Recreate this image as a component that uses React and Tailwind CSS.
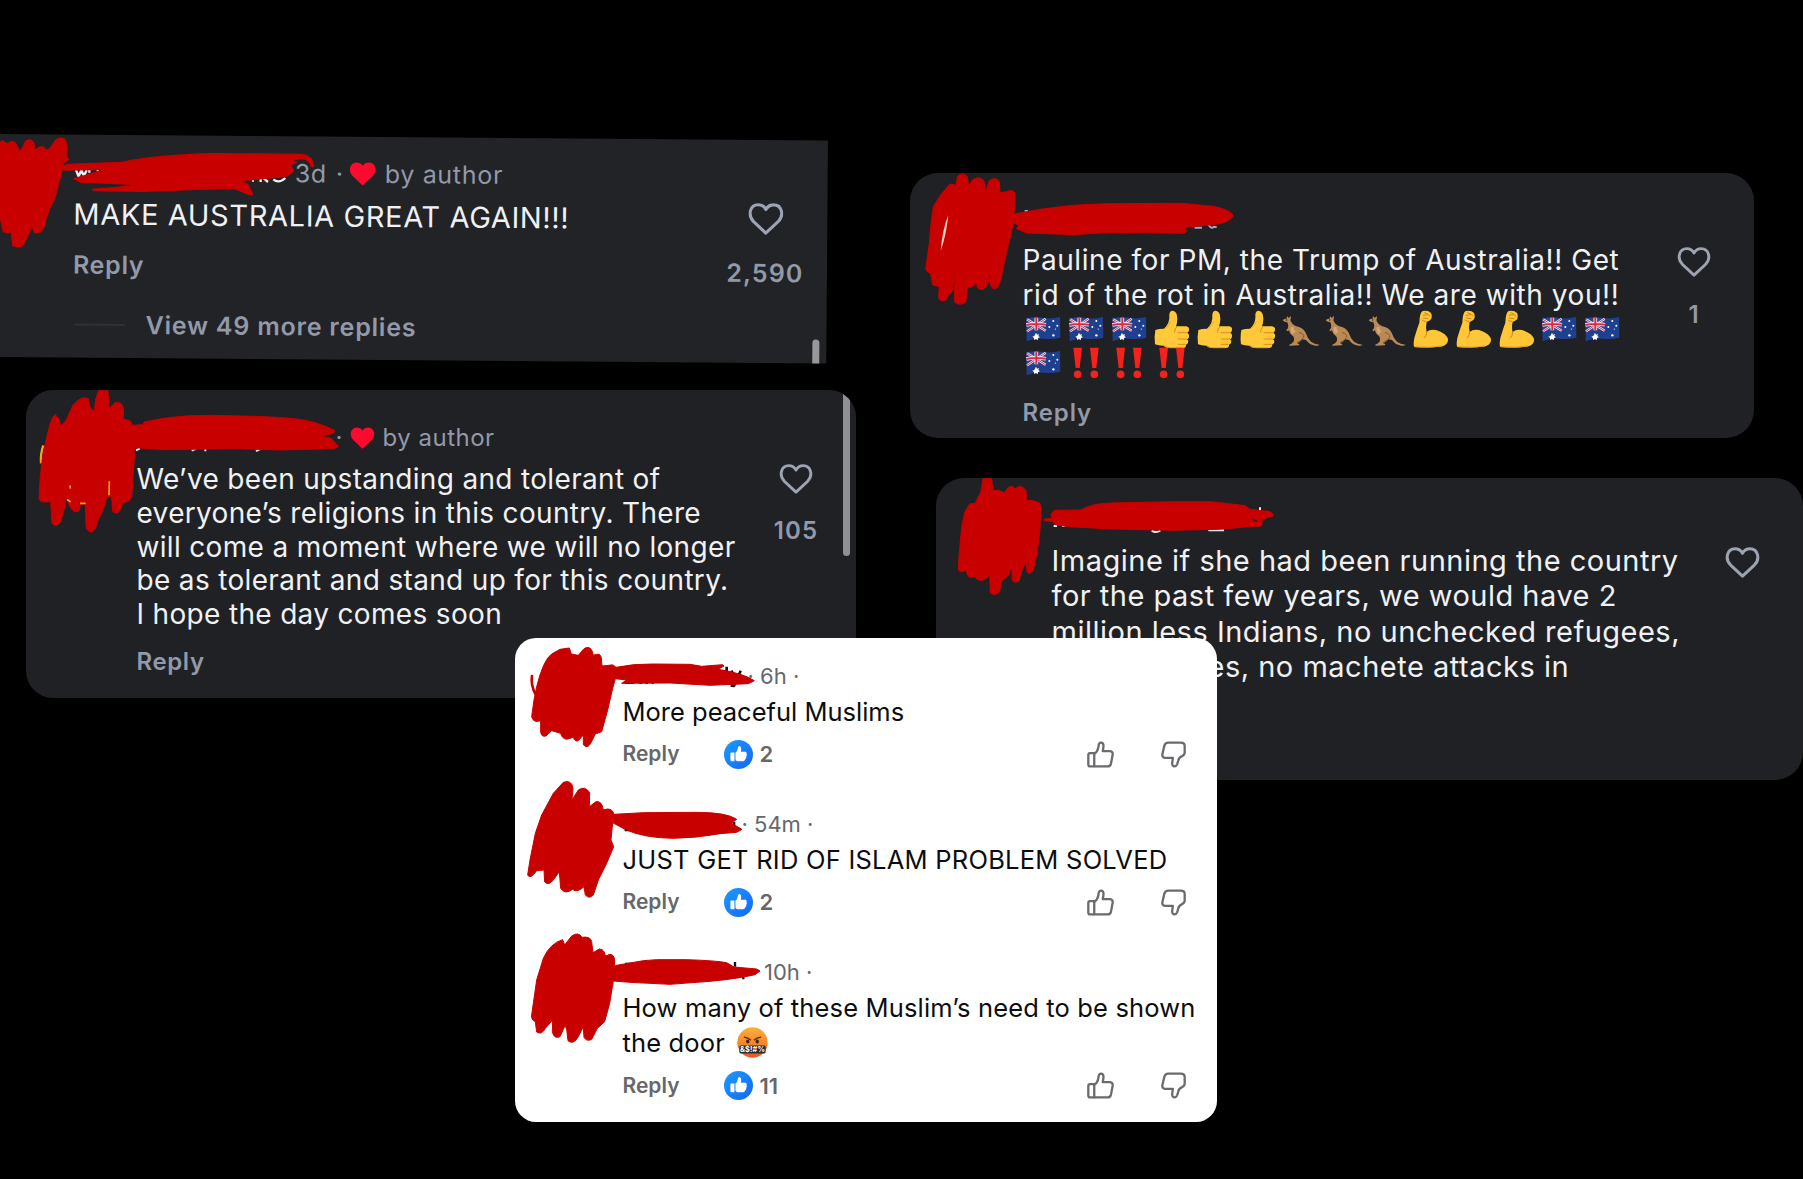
import { clsx } from 'clsx';

const FLAG = 'flag';
const THUMB = 'thumb';
const ROO = 'roo';
const ARM = 'arm';
const BANG = 'bang';

const emojiRows = [
  [FLAG, FLAG, FLAG, THUMB, THUMB, THUMB, ROO, ROO, ROO, ARM, ARM, ARM, FLAG, FLAG],
  [FLAG, BANG, BANG, BANG],
];

const replies = [
  { time: '6h', gap: 'pl-[125px]', lines: ['More peaceful Muslims'], likes: 2 },
  { time: '54m', gap: 'pl-[119px]', tracking: 'tracking-[0.24px]', lines: ['JUST GET RID OF ISLAM PROBLEM SOLVED'], likes: 2 },
  {
    time: '10h',
    gap: 'pl-[129px]',
    tracking: 'tracking-[0.15px]',
    lines: ['How many of these Muslim’s need to be shown', 'the door'],
    likes: 11,
    angry: true,
  },
];

function HeartOutline({ className }) {
  return (
    <svg viewBox="0 0 36 33" className={clsx('shrink-0', className)} fill="none" stroke="#9ca3b2" strokeWidth="3.2" strokeLinejoin="round">
      <path d="M18 31 L5.4 19.2 C-1.2 12.6 1.6 1.8 10 1.8 C13.4 1.8 16.4 3.6 18 6.6 C19.6 3.6 22.6 1.8 26 1.8 C34.4 1.8 37.2 12.6 30.6 19.2 Z" />
    </svg>
  );
}

function RedHeart({ className }) {
  return (
    <svg viewBox="0 0 26 24" className={clsx('shrink-0', className)} fill="#fe0a2e">
      <path d="M13 23.6 L3 14.2 C-2.4 8.6 0.6 0.6 6.8 0.6 C9.6 0.6 11.8 1.9 13 4 C14.2 1.9 16.4 0.6 19.2 0.6 C25.4 0.6 28.4 8.6 23 14.2 Z" />
    </svg>
  );
}

function ThumbUp() {
  return (
    <svg viewBox="0 0 82 80" className="h-[27px] w-[27px]" fill="none" stroke="#696b6f" strokeWidth="7" strokeLinejoin="round" strokeLinecap="round">
      <path d="M9 36 H22 V76 H9 Q4 76 4 70 V42 Q4 36 9 36 Z" />
      <path d="M22 38 Q32 32 34 20 L36 9 Q38 3 44 4 Q51 6 50 16 L48 30 H70 Q79 31 78 40 L73 67 Q71 76 62 76 H22" />
    </svg>
  );
}

function ThumbDown() {
  return (
    <svg viewBox="0 0 76 80" className="h-[27px] w-[25px]" fill="none" stroke="#696b6f" strokeWidth="7" strokeLinejoin="round" strokeLinecap="round">
      <path d="M22 4 H60 Q72 4 72 14 V34 Q72 41 64 45 Q54 49 52 60 L49 70 Q46 77 39 76 Q33 74 34 66 L36 50 H12 Q3 49 4 40 L10 14 Q13 4 22 4 Z" />
    </svg>
  );
}

function LikeBadge() {
  return (
    <svg viewBox="0 0 86 86" className="h-[29px] w-[29px]">
      <defs>
        <linearGradient id="like" x1="0" y1="0" x2="1" y2="1">
          <stop offset="0" stopColor="#1c9bff" />
          <stop offset="1" stopColor="#1566f5" />
        </linearGradient>
      </defs>
      <circle cx="43" cy="43" r="43" fill="url(#like)" />
      <path fill="#fff" d="M19 40 Q19 37 22 37 H31 V63 H22 Q19 63 19 60 Z" />
      <path fill="#fff" d="M34 38 Q40 33 41 24 Q41 18 46 18 Q52 20 51 29 L50 35 H64 Q69 37 67 42 Q69 47 66 50 Q67 55 63 57 Q62 63 56 63 H40 Q34 62 34 58 Z" />
    </svg>
  );
}

function AngryFace() {
  return (
    <svg viewBox="0 0 92 92" className="ml-[12px] h-[31px] w-[31px]">
      <defs>
        <linearGradient id="angry" x1="0" y1="0" x2="0" y2="1">
          <stop offset="0" stopColor="#f9b13b" />
          <stop offset="0.5" stopColor="#f58a2c" />
          <stop offset="1" stopColor="#e8562a" />
        </linearGradient>
      </defs>
      <circle cx="46" cy="46" r="45" fill="url(#angry)" />
      <path d="M22 30 Q32 32 40 38 M70 30 Q60 32 52 38" stroke="#5a2a0c" strokeWidth="4" fill="none" strokeLinecap="round" />
      <ellipse cx="32" cy="43" rx="5" ry="6" fill="#4b220b" />
      <ellipse cx="60" cy="43" rx="5" ry="6" fill="#4b220b" />
      <rect x="7" y="55" width="78" height="24" rx="5" fill="#2e2727" />
      <text x="46" y="75" textAnchor="middle" fontSize="22" fontWeight="700" fill="#fff" fontFamily="Inter, sans-serif" textLength="74" lengthAdjust="spacingAndGlyphs">&amp;$!#%</text>
    </svg>
  );
}

function Emoji({ kind }) {
  return (
    <svg viewBox="0 0 129 103" className="h-[34.4px] w-[43px] shrink-0 overflow-visible">
      {kind === FLAG && (
        <g>
          <path d="M10 20 Q34 14 60 18 Q88 22 111 15 L112 77 Q88 83 60 80 Q34 77 11 88 Z" fill="#1f3f8f" />
          <path d="M10 20 Q34 14 69 19 V57 Q38 52 11 60 Z" fill="#2b4593" />
          <path d="M12 22 L68 56 M68 20 L12 58" stroke="#f1e9ee" strokeWidth="7" />
          <path d="M12 22 L68 56 M68 20 L12 58" stroke="#d8364f" strokeWidth="3" />
          <path d="M40 17 V55 M10 39 Q36 33 69 38" stroke="#f4eef2" strokeWidth="11" fill="none" />
          <path d="M40 17 V55 M10 39 Q36 33 69 38" stroke="#d92b45" strokeWidth="6" fill="none" />
          <path d="M39 62 l3 6 6 -2 -2 6 5 4 -6 2 -1 7 -5 -4 -6 3 0 -6 -5 -4 6 -2 z" fill="#fff" />
          <g fill="#fff">
            <circle cx="91" cy="27" r="3" />
            <circle cx="79" cy="45" r="3" />
            <circle cx="103" cy="41" r="3" />
            <circle cx="97" cy="51" r="1.8" />
            <circle cx="91" cy="70" r="3.6" />
          </g>
        </g>
      )}
      {kind === THUMB && (
        <g>
          <path d="M10 54 Q20 50 36 50 Q54 34 52 10 Q52 -4 62 -4 Q76 -2 76 20 Q76 32 72 43 H102 Q113 45 111 55 Q110 60 106 62 Q113 66 111 74 Q110 80 105 82 Q111 86 108 93 Q106 97 102 98 Q104 107 92 108 H52 Q40 108 34 101 Q20 101 9 97 Q6 76 10 54 Z" fill="#ffc93a" />
          <path d="M74 45 Q66 50 68 60 M78 62 H105 M78 81 H104 M78 97 H100" stroke="#d98f16" strokeWidth="3" fill="none" strokeLinecap="round" />
          <path d="M36 52 Q50 44 56 28" stroke="#f0ab20" strokeWidth="3" fill="none" />
          <path d="M34 100 Q44 107 54 107 H90" stroke="#e39a1a" strokeWidth="3" fill="none" />
        </g>
      )}
      {kind === ROO && (
        <g>
          <path d="M5 25 Q8 19 17 20 L18 12 L23 18 L30 12 Q30 20 28 25 Q33 38 46 43 Q64 45 74 62 Q80 80 90 89 Q100 96 115 98 Q114 102 103 101 Q86 99 75 84 L64 82 Q58 90 48 93 L55 97 L54 100 L25 101 Q23 97 31 95 L37 90 Q42 80 36 72 Q27 68 24 55 L19 58 L16 55 L21 48 Q23 38 19 31 Q10 31 5 25 Z" fill="#b98a55" />
          <path d="M30 45 Q26 58 35 67 L44 58 Q36 54 38 45 Z" fill="#d3aa75" />
          <path d="M54 62 Q70 64 68 76 Q62 86 48 92" stroke="#82592f" strokeWidth="3" fill="none" />
          <circle cx="17" cy="24" r="2" fill="#30200f" />
        </g>
      )}
      {kind === ARM && (
        <g>
          <path d="M13 105 Q9 99 13 78 Q22 48 28 32 Q29 2 38 -3 Q54 -7 63 3 Q69 17 60 25 L50 30 Q46 45 50 60 Q60 50 78 54 Q108 64 114 80 Q116 96 98 103 Q56 109 13 105 Z" fill="#ffc638" />
          <path d="M50 60 Q50 72 43 78 M44 2 Q54 4 60 12 M40 10 L52 8 M40 18 L54 20 M48 28 Q40 28 36 24" stroke="#cf8817" strokeWidth="3" fill="none" strokeLinecap="round" />
          <path d="M15 104 Q60 108 96 102" stroke="#e8a122" strokeWidth="3" fill="none" />
        </g>
      )}
      {kind === BANG && (
        <g fill="#f5221b">
          <path d="M22 5 H48 L41 66 H29 Z M72 5 H98 L91 66 H79 Z" />
          <circle cx="35" cy="85" r="11.5" />
          <circle cx="85" cy="85" r="11.5" />
        </g>
      )}
    </svg>
  );
}

/* marker strokes over avatars and names */
function Ink() {
  return (
    <svg viewBox="0 0 1803 1179" className="pointer-events-none absolute inset-0 h-[1179px] w-[1803px]" strokeLinejoin="round">
      <g transform="translate(0 120) scale(.33333)">
        <path d="M228 150 l8 20 8 -20 8 18 8 -18 M268 150 v8 M290 150 h6 M312 146 h6 M704 183 h22 M744 180 v-12 M756 182 h6 M782 168 v18 M792 176 l12 10 M820 178 q16 14 36 -4" stroke="#f0f0f2" strokeWidth="7" fill="none" />
        <g fill="#c80000" stroke="#c80000" strokeWidth="4">
          <path d="M0 68 L8 62 L20 72 L32 66 Q45 62 52 80 L58 94 L66 88 L76 66 Q90 52 102 70 L104 92 L118 82 Q132 76 138 92 L150 86 L166 62 Q180 50 194 58 Q202 68 200 90 L198 112 L206 118 L190 128 L186 150 L176 190 L164 235 L150 262 L140 290 L130 325 Q118 342 104 338 L96 318 L84 345 L72 372 Q56 386 38 376 L34 335 Q20 342 10 334 L0 290 Z" />
          <path d="M186 140 L204 133 L365 127 Q480 104 640 101 L905 103 Q940 108 940 140 L934 140 Q930 118 905 114 L870 122 L890 128 L870 134 L880 150 Q872 165 855 170 L720 182 L745 195 L758 224 L748 224 L705 206 L590 208 L430 214 L282 212 L278 208 L345 203 L420 194 L240 186 L222 176 L320 148 L190 150 Z" />
        </g>
      </g>
      <g transform="translate(20 380) scale(.33333)">
        <path d="M70 196 Q61 220 63 250" stroke="#f6a11f" strokeWidth="7" fill="none" />
        <path d="M348 211 l12 -6 M515 212 l14 -6 M556 206 v8 M708 213 l12 -6" stroke="#f0f0f2" strokeWidth="6" fill="none" />
        <path fill="#c80000" stroke="#c80000" strokeWidth="3" d="M57 355 L61 290 L66 245 L76 190 L88 140 Q98 106 106 104 L118 118 L122 140 L140 118 L160 74 Q185 46 205 56 L210 80 L222 95 L228 55 L236 32 L264 32 L266 65 L268 85 L285 68 Q305 62 310 84 L310 118 L330 122 L338 136 L370 134 L372 126 L430 115 Q500 105 570 106 L660 108 Q760 110 830 117 Q890 124 945 152 L940 160 L905 168 L935 176 L956 200 L940 206 L780 210 L640 206 L430 209 L345 203 L341 260 L335 350 Q325 370 308 366 L300 392 Q288 404 278 394 L275 350 L262 350 L248 392 L232 425 Q228 455 212 456 Q198 452 198 436 L196 372 L180 374 L178 392 Q165 402 152 384 L138 352 L134 382 L122 425 Q108 444 96 430 L92 365 L75 366 Q57 366 57 355 Z" />
        <path d="M141 358 L152 366 M180 370 L197 370 M150 316 L151 326 M268 304 L267 346" stroke="#f6a11f" strokeWidth="5" fill="none" />
      </g>
      <g transform="translate(900 160) scale(.33333)">
        <path d="M374 153 h10 M884 203 h22 M926 194 q6 14 16 6 l8 2" stroke="#a2a6b0" strokeWidth="6" fill="none" />
        <path fill="#c80000" stroke="#c80000" strokeWidth="3" d="M92 200 L100 140 L122 105 L150 72 L168 76 L172 50 Q188 34 202 50 L206 76 L218 60 Q238 46 252 62 L256 98 L268 62 Q288 48 298 66 L300 98 L318 96 Q336 86 344 98 L344 128 L342 162 L420 148 Q520 132 620 131 L845 130 L940 139 Q1000 152 999 170 Q980 190 940 194 L850 202 L862 212 L850 220 L640 217 L520 224 L380 219 L350 206 L356 196 L340 188 L332 225 L318 285 L304 350 Q295 388 284 387 Q272 385 272 370 L270 345 L262 375 Q246 396 234 384 L228 370 Q212 390 202 378 L198 425 Q180 440 164 426 L164 330 L156 395 L146 405 L138 420 Q120 428 116 412 L118 380 L98 374 L92 340 Q76 336 78 320 L88 250 Z" />
        <path d="M145 165 Q128 205 122 272 Q138 230 145 165 Z" fill="#f4d3bd" />
      </g>
      <g transform="translate(925 460) scale(.33333)">
        <path d="M386 198 h10 M412 198 h8 M680 212 q12 8 26 0 M850 211 h47 M1005 142 v12" stroke="#f0f0f2" strokeWidth="6" fill="none" />
        <g fill="#c80000" stroke="#c80000" strokeWidth="3">
          <path d="M102 290 L110 200 L120 155 L134 132 L150 130 L168 95 L174 56 L200 56 L204 92 Q220 86 238 98 L252 80 Q262 76 270 86 Q290 70 304 94 L304 122 Q320 118 345 130 L348 150 L344 220 L336 280 L326 325 Q315 350 306 335 L302 300 L290 335 L282 362 Q268 372 262 360 L260 320 L250 345 L228 365 L224 395 Q208 410 196 398 L194 345 L180 358 Q160 366 148 350 Q132 356 128 345 L122 330 Q105 342 100 328 Z" />
          <path d="M358 177 L380 175 L378 162 L388 151 L468 150 Q500 130 560 129 L740 125 L860 125 L960 137 L975 148 L1030 154 Q1048 160 1044 168 L1012 178 L1010 198 L965 201 L880 208 L740 211 L560 207 L430 200 L390 194 L382 184 L358 182 Z" />
        </g>
        <path d="M976 174 L1000 184 L992 186 Z" fill="#202124" />
      </g>
      <g transform="translate(510 630) scale(.33333)">
        <path d="M345 158 h28 M388 158 h8 M406 158 h8 M425 158 h6 M650 110 v18 M664 122 l12 22 M692 122 l-20 46 -10 -2 M344 600 h18 M380 598 v-8 M400 598 h8 M426 598 v-8 M672 576 v12" stroke="#111" strokeWidth="8" fill="none" />
        <path d="M66 138 Q62 165 76 192" stroke="#c80000" strokeWidth="8" fill="none" strokeLinecap="round" />
        <g fill="#c80000" stroke="#c80000" strokeWidth="3">
          <path d="M65 260 L72 210 L80 170 Q100 90 125 72 L150 58 L178 54 L184 72 L205 76 L222 56 Q238 46 246 62 L250 76 Q272 66 274 84 L276 108 L296 106 Q310 100 318 112 Q370 101 430 102 L540 103 L575 109 L638 104 L642 108 L625 118 Q700 130 733 152 L715 161 L600 166 L480 159 L335 160 L350 150 L316 146 L308 175 L293 240 L275 305 L256 312 L242 340 Q232 358 220 344 L220 315 L205 332 Q194 336 190 322 L170 328 Q156 326 152 310 L125 302 L108 318 Q94 322 92 306 L92 272 Q70 280 65 260 Z" />
          <path d="M53 735 L60 690 L76 610 L95 555 L130 490 L160 457 Q185 448 189 475 L186 510 L205 480 Q225 466 239 488 L238 530 L258 515 Q276 512 280 540 Q306 530 312 553 L400 548 L560 547 Q650 547 680 568 L664 580 L696 598 L680 607 L630 611 Q560 624 490 625 Q400 624 345 598 L308 578 L303 630 L311 650 L290 700 L265 750 L250 795 Q238 808 226 795 L222 770 Q200 790 188 778 Q165 795 152 775 L148 725 L130 750 Q116 768 104 756 L102 720 L80 722 Q60 750 53 735 Z" />
        </g>
      </g>
      <g transform="translate(510 880) scale(.33333)">
        <path d="M345 252 h20 M675 246 v14 M700 284 v14" stroke="#111" strokeWidth="7" fill="none" />
        <path d="M162 430 l8 14 4 -10" stroke="#555" strokeWidth="6" fill="none" />
        <path fill="#c80000" stroke="#c80000" strokeWidth="3" d="M65 405 L80 300 L100 235 Q120 190 158 179 L164 195 L185 168 Q205 154 216 172 Q242 168 245 185 L249 218 L268 207 Q284 208 286 228 L300 223 Q318 224 313 257 L360 249 Q400 240 440 239 L530 239 Q620 242 650 248 L672 261 L740 267 L750 273 L735 284 Q690 295 600 304 L480 313 L360 307 L310 303 L299 370 L284 425 L262 445 L245 478 Q230 486 222 472 L220 440 L205 470 Q190 496 174 482 L168 430 L150 470 Q132 478 127 455 L128 420 L106 445 Q95 466 80 456 L76 425 Q63 420 65 405 Z" />
      </g>
    </svg>
  );
}

export default function App() {
  return (
    <div className="relative h-[1179px] w-[1803px] overflow-hidden bg-black font-[Inter,sans-serif] text-[#f0f1f3] whitespace-nowrap">
      {/* slightly tilted clipping */}
      <section className="absolute top-[134px] left-0 flex h-[223px] w-[828px] origin-top-left rotate-[0.45deg] bg-[#222327] pl-[74px] text-[#9299a8]">
        <div className="w-[640px] pt-[22px]">
          <div className="flex h-[30px] items-center pl-[221px] text-[25px] leading-[30px] tracking-[0.7px]">
            <span className="w-[41px]">3d</span>
            <span className="w-[14px]">·</span>
            <RedHeart className="h-[24px] w-[26px]" />
            <span className="ml-[9px]">by author</span>
          </div>
          <p className="mt-[11px] text-[29px] leading-[34px] tracking-[0.64px] text-[#f0f1f3]">MAKE AUSTRALIA GREAT AGAIN!!!</p>
          <div className="mt-[18px] text-[25px] leading-[30px] font-semibold tracking-[0.7px]">Reply</div>
          <div className="mt-[30px] flex items-center gap-[21px] pl-[2px] text-[25px] leading-[30px] font-semibold tracking-[0.8px]">
            <span className="h-[2px] w-[50px] bg-[#303136]" />
            <span>View 49 more replies</span>
          </div>
        </div>
        <div className="flex w-[104px] flex-col items-center pt-[63px]">
          <HeartOutline className="h-[32px] w-[35px]" />
          <span className="mt-[23px] text-[25px] leading-[30px] font-semibold tracking-[1.1px]">2,590</span>
        </div>
        <span className="absolute right-[7px] bottom-0 h-[24px] w-[7px] rounded-t-full bg-[#98989b]" />
      </section>

      <section className="absolute top-[390px] left-[26px] flex h-[308px] w-[830px] overflow-hidden rounded-[27px] bg-[#202125] pl-[110.5px] text-[#9299a8]">
        <div className="w-[622px] pt-[33px]">
          <div className="flex h-[30px] items-center pl-[199px] text-[24px] leading-[30px] tracking-[0.5px]">
            <span className="w-[14px]">·</span>
            <RedHeart className="h-[22px] w-[25px]" />
            <span className="ml-[8px]">by author</span>
          </div>
          <p className="mt-[10px] text-[28px] leading-[33.8px] tracking-[0.33px] text-[#f0f1f3]">
            We’ve been upstanding and tolerant of
            <br />
            everyone’s religions in this country. There
            <br />
            will come a moment where we will no longer
            <br />
            be as tolerant and stand up for this country.
            <br />I hope the day comes soon
          </p>
          <div className="mt-[15px] text-[24px] leading-[30px] font-semibold tracking-[0.6px]">Reply</div>
        </div>
        <div className="flex w-[75px] flex-col items-center pt-[74px]">
          <HeartOutline className="h-[30px] w-[34px]" />
          <span className="mt-[22px] text-[24px] leading-[30px] font-semibold tracking-[1.2px]">105</span>
        </div>
        <span className="absolute top-0 right-[6px] h-[166px] w-[7px] rounded-b-full bg-[#8f9093]" />
      </section>

      <section className="absolute top-[173px] left-[910px] flex h-[265px] w-[844px] rounded-[28px] bg-[#202125] pl-[112.5px] text-[#9299a8]">
        <div className="w-[632px] pt-[70px]">
          <p className="text-[28px] leading-[34.5px] tracking-[0.56px] text-[#f0f1f3]">
            Pauline for PM, the Trump of Australia!! Get
            <br />
            rid of the rot in Australia!! We are with you!!
          </p>
          {emojiRows.map((row, i) => (
            <div key={i} className="flex h-[34.4px]">
              {row.map((kind, j) => (
                <Emoji key={j} kind={kind} />
              ))}
            </div>
          ))}
          <div className="mt-[17px] text-[24px] leading-[30px] font-semibold tracking-[0.9px]">Reply</div>
        </div>
        <div className="flex w-[78px] flex-col items-center pt-[74px]">
          <HeartOutline className="h-[30px] w-[34px]" />
          <span className="mt-[23px] text-[24px] leading-[30px] font-semibold">1</span>
        </div>
      </section>

      <section className="absolute top-[478px] left-[936px] flex h-[302px] w-[867px] rounded-[28px] bg-[#202125] pl-[115.5px]">
        <div className="w-[673px] pt-[65px] text-[29px] leading-[35.4px] tracking-[0.5px]">
          <p>
            Imagine if she had been running the country
            <br />
            for the past few years, we would have 2
            <br />
            million less Indians, no unchecked refugees,
          </p>
          <p className="pl-[156px]">es, no machete attacks in</p>
        </div>
        <HeartOutline className="mt-[69px] h-[31px] w-[35px]" />
      </section>

      <section className="absolute top-[638px] left-[515px] flex h-[484px] w-[702px] flex-col gap-[41.6px] rounded-[21px] bg-white pt-[23.7px] pr-[31px] pl-[107.5px] text-[#65676b]">
        {replies.map((reply) => (
          <article key={reply.time}>
            <div className={clsx('text-[22px] leading-[28px]', reply.gap)}>· {reply.time} ·</div>
            <div className={clsx('mt-[4px] text-[25.5px] leading-[35.4px] text-[#0c0d0f]', reply.tracking)}>
              {reply.lines.map((line, i) => (
                <p key={line} className="flex items-center">
                  {line}
                  {reply.angry && i === 1 && <AngryFace />}
                </p>
              ))}
            </div>
            <div className="mt-[11px] flex h-[28px] items-center text-[21px] leading-[28px] font-semibold">
              <span className="w-[101px]">Reply</span>
              <LikeBadge />
              <span className="ml-[7px] text-[22px]">{reply.likes}</span>
              <div className="ml-auto flex gap-[47px]">
                <ThumbUp />
                <ThumbDown />
              </div>
            </div>
          </article>
        ))}
      </section>

      <Ink />
    </div>
  );
}
